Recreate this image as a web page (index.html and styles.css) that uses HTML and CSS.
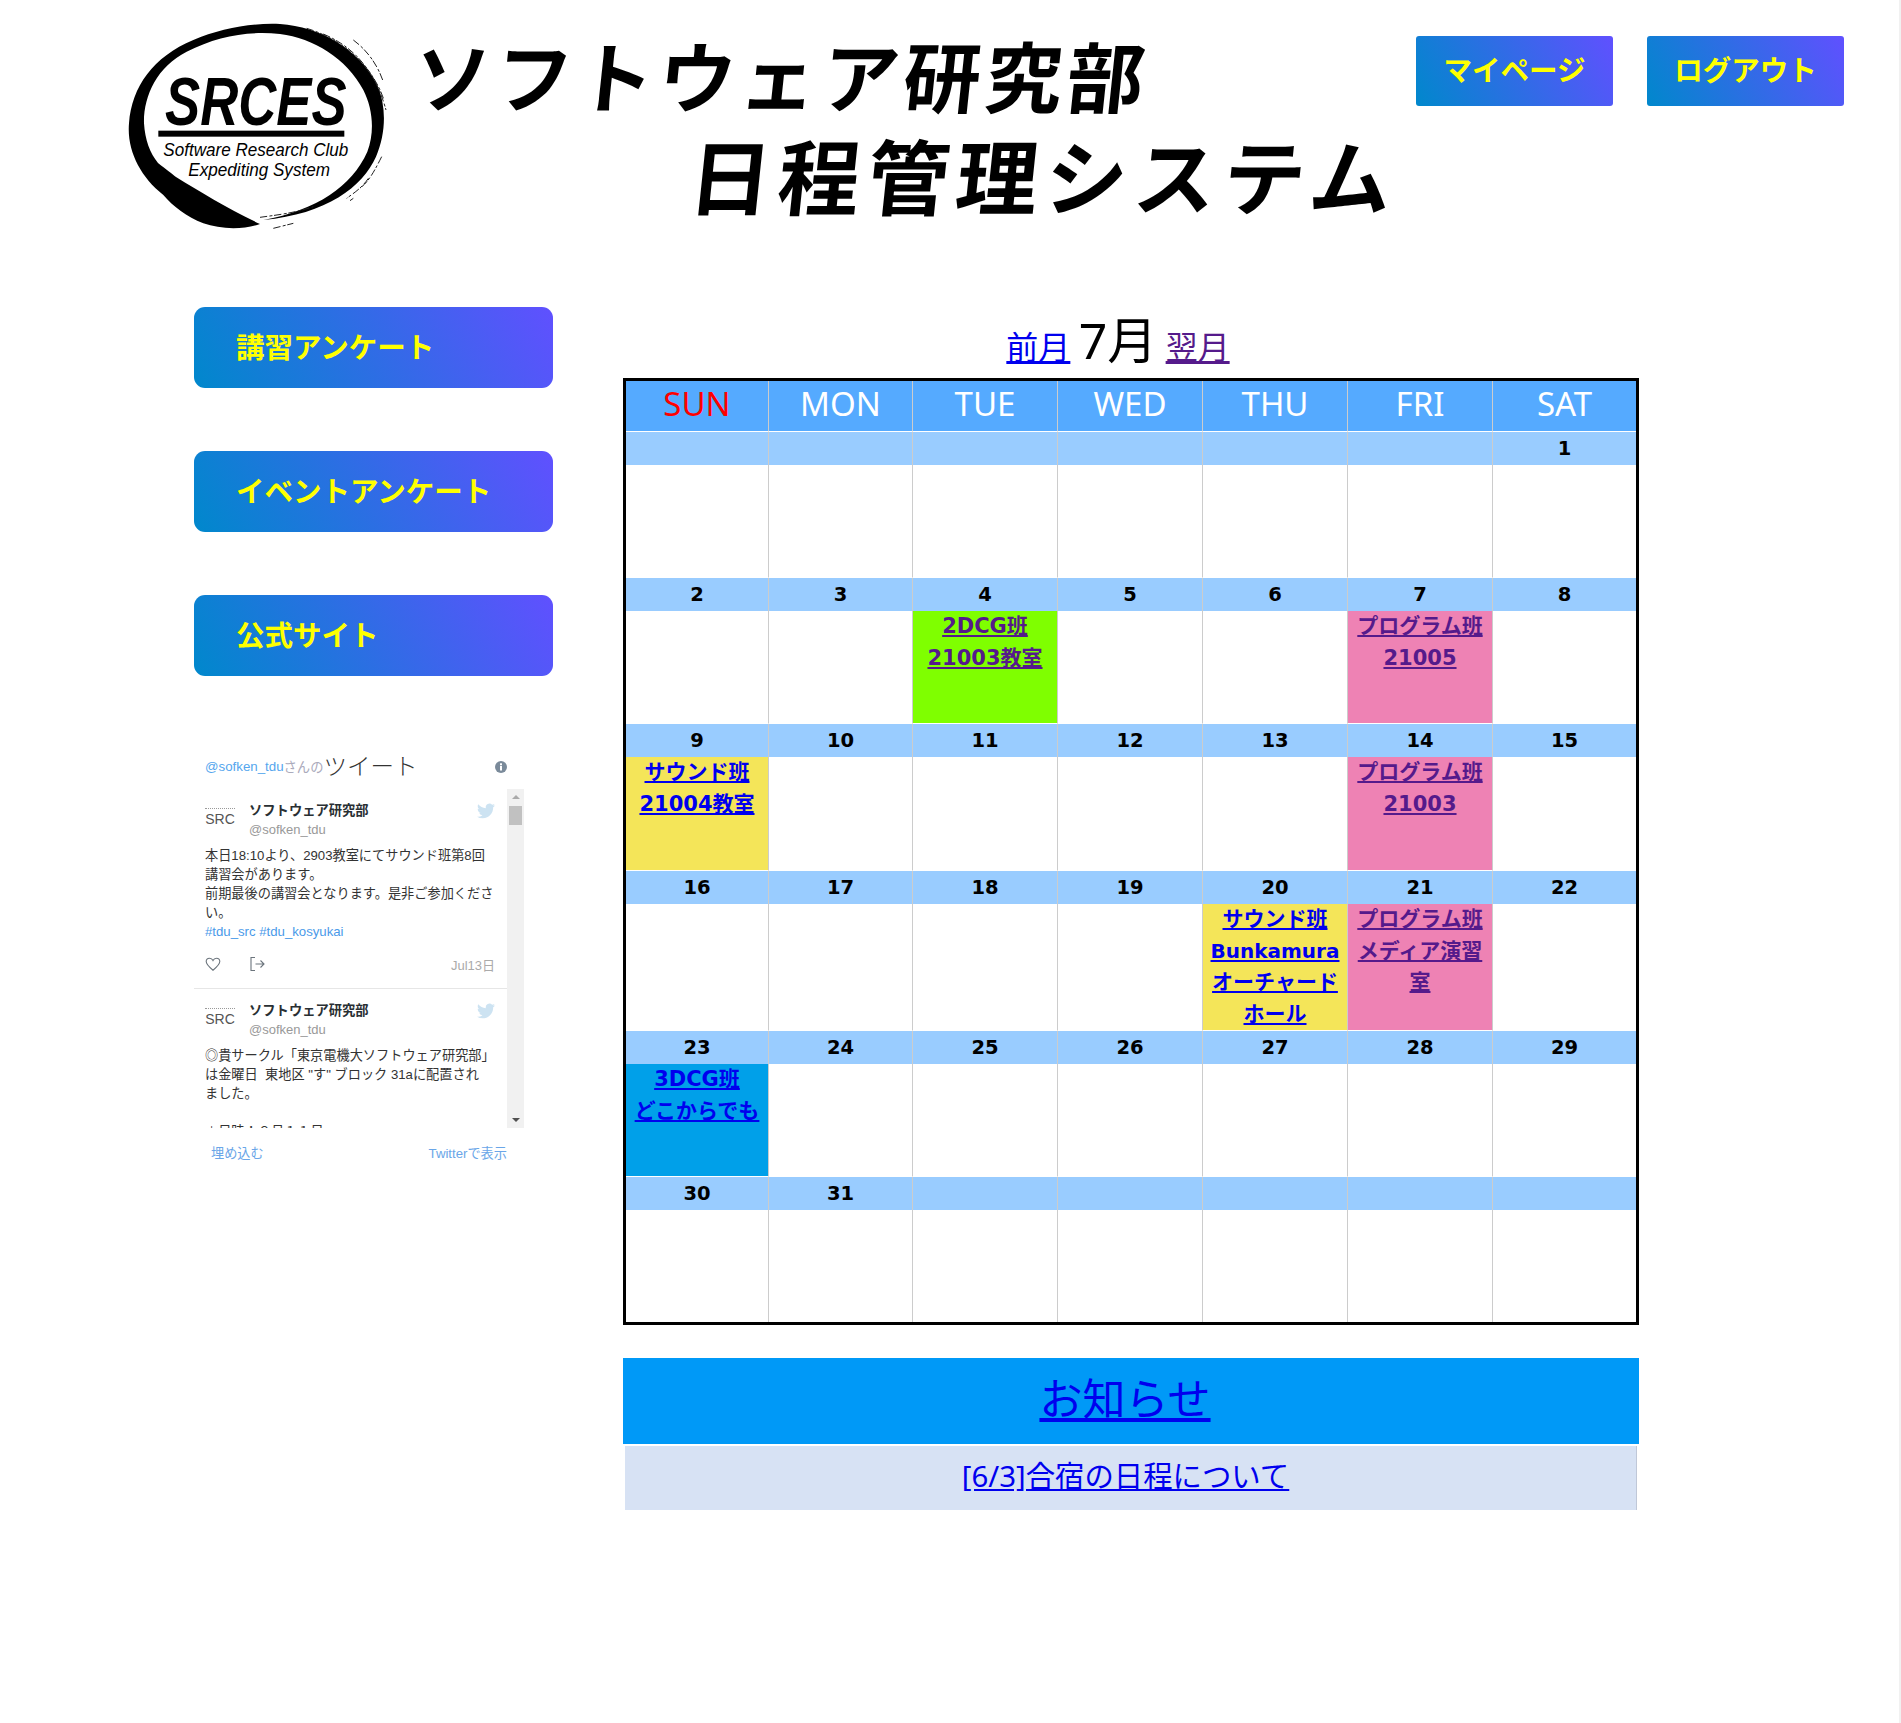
FILE: index.html
```html
<!DOCTYPE html>
<html lang="ja">
<head>
<meta charset="utf-8">
<title>ソフトウェア研究部 日程管理システム</title>
<link rel="stylesheet" href="styles.css">
</head>
<body>
<header class="header">
  <svg class="logo" viewBox="0 0 840 690" role="img" aria-label="SRCES">
    <path d="M420 642C370 660 300 658 250 640C200 620 160 590 130 555C60 500 20 420 27 340C35 230 100 140 220 90C300 55 400 38 480 42C600 50 715 115 772 225C800 290 798 370 768 440C728 530 620 612 430 630C590 600 695 530 742 425C765 365 758 295 730 240C680 145 580 85 480 72C380 62 290 80 200 125C110 170 70 260 72 340C75 390 90 430 114 459C140 480 155 490 168 501C240 545 330 600 420 642Z"/>
    <path class="dry" d="M560 55C660 85 755 160 792 270M610 72C700 110 765 180 798 300M700 90C740 120 770 160 788 210M785 440C760 490 745 515 720 535M745 505C725 535 700 550 680 565M420 622C470 615 520 610 580 590M460 655L520 640M700 565L690 572"/>
    <text class="logo-big" x="135" y="345" textLength="545" lengthAdjust="spacingAndGlyphs">SRCES</text>
    <rect x="115" y="362" width="558" height="18"/>
    <text class="logo-small" x="130" y="438" textLength="555" lengthAdjust="spacingAndGlyphs">Software Research Club</text>
    <text class="logo-small" x="205" y="497" textLength="425" lengthAdjust="spacingAndGlyphs">Expediting System</text>
  </svg>
  <h1 class="site-title">
    <span class="title-one">ソフトウェア研究部</span>
    <span class="title-two">日程管理システム</span>
  </h1>
  <nav class="top-nav">
    <a class="grad-btn top-btn" href="#">マイページ</a>
    <a class="grad-btn top-btn" href="#">ログアウト</a>
  </nav>
</header>

<div class="page">
  <aside class="sidebar">
    <a class="grad-btn side-btn" href="#">講習アンケート</a>
    <a class="grad-btn side-btn" href="#">イベントアンケート</a>
    <a class="grad-btn side-btn" href="#">公式サイト</a>

    <section class="widget">
      <div class="widget-head">
        <span class="w-handle">@sofken_tdu</span><span class="w-san">さんの</span><span class="w-title">ツイート</span>
        <svg class="w-info" viewBox="0 0 12 12"><circle cx="6" cy="6" r="6"/><rect class="w-info-mark" x="5" y="5" width="2" height="4.5"/><rect class="w-info-mark" x="5" y="2.3" width="2" height="2"/></svg>
      </div>
      <div class="widget-body">
        <div class="tweets">
          <article class="tweet">
            <div class="tweet-head">
              <div class="avatar"><span class="avatar-dots"></span><span class="avatar-text">SRC</span></div>
              <div class="tweet-author"><div class="author-name">ソフトウェア研究部</div><div class="author-handle">@sofken_tdu</div></div>
              <svg class="bird" viewBox="0 0 24 24"><path d="M23.953 4.57a10 10 0 01-2.825.775 4.958 4.958 0 002.163-2.723c-.951.555-2.005.959-3.127 1.184a4.92 4.92 0 00-8.384 4.482C7.69 8.095 4.067 6.13 1.64 3.162a4.822 4.822 0 00-.666 2.475c0 1.71.87 3.213 2.188 4.096a4.904 4.904 0 01-2.228-.616v.06a4.923 4.923 0 003.946 4.827 4.996 4.996 0 01-2.212.085 4.936 4.936 0 004.604 3.417 9.867 9.867 0 01-6.102 2.105c-.39 0-.779-.023-1.17-.067a13.995 13.995 0 007.557 2.209c9.053 0 13.998-7.496 13.998-13.985 0-.21 0-.42-.015-.63A9.935 9.935 0 0024 4.59z"/></svg>
            </div>
            <p class="tweet-text">本日18:10より、2903教室にてサウンド班第8回<br>講習会があります。<br>前期最後の講習会となります。是非ご参加くださ<br>い。<br><span class="tag">#tdu_src #tdu_kosyukai</span></p>
            <div class="tweet-actions">
              <svg class="act" viewBox="0 0 16 16"><path d="M8 14.2C4 11 1.2 8.6 1.2 5.6 1.2 3.6 2.7 2.2 4.5 2.2 6 2.2 7.3 3 8 4.4 8.7 3 10 2.2 11.500 2.200 13.300 2.200 14.800 3.600 14.800 5.600 14.800 8.600 12 11 8 14.200Z"/></svg>
              <svg class="act act-share" viewBox="0 0 16 16"><path d="M6 1.500H2V14.500H6M6.500 8H15M11.500 4.500L15 8 11.500 11.500"/></svg>
              <span class="tweet-date">Jul13日</span>
            </div>
          </article>
          <article class="tweet tweet-last">
            <div class="tweet-head">
              <div class="avatar"><span class="avatar-dots"></span><span class="avatar-text">SRC</span></div>
              <div class="tweet-author"><div class="author-name">ソフトウェア研究部</div><div class="author-handle">@sofken_tdu</div></div>
              <svg class="bird" viewBox="0 0 24 24"><path d="M23.953 4.57a10 10 0 01-2.825.775 4.958 4.958 0 002.163-2.723c-.951.555-2.005.959-3.127 1.184a4.92 4.92 0 00-8.384 4.482C7.69 8.095 4.067 6.13 1.64 3.162a4.822 4.822 0 00-.666 2.475c0 1.71.87 3.213 2.188 4.096a4.904 4.904 0 01-2.228-.616v.06a4.923 4.923 0 003.946 4.827 4.996 4.996 0 01-2.212.085 4.936 4.936 0 004.604 3.417 9.867 9.867 0 01-6.102 2.105c-.39 0-.779-.023-1.17-.067a13.995 13.995 0 007.557 2.209c9.053 0 13.998-7.496 13.998-13.985 0-.21 0-.42-.015-.63A9.935 9.935 0 0024 4.59z"/></svg>
            </div>
            <p class="tweet-text">◎貴サークル「東京電機大ソフトウェア研究部」<br>は金曜日&nbsp; 東地区 &quot;す&quot; ブロック 31aに配置され<br>ました。<br><br>＊日時：８月１１日<br></p>
          </article>
        </div>
        <div class="scrollbar">
          <span class="arrow-up"></span>
          <span class="thumb"></span>
          <span class="arrow-down"></span>
        </div>
      </div>
      <div class="widget-foot"><span>埋め込む</span><span>Twitterで表示</span></div>
    </section>
  </aside>

  <main class="content">
    <div class="month-row"><a class="link" href="#">前月</a> <span class="month-now">7月</span> <a class="link seen" href="#">翌月</a></div>
    <table class="calendar">
      <thead>
        <tr><th class="sun">SUN</th><th>MON</th><th>TUE</th><th>WED</th><th>THU</th><th>FRI</th><th>SAT</th></tr>
      </thead>
      <tbody>
        <tr class="dates"><td></td><td></td><td></td><td></td><td></td><td></td><td>1</td></tr>
        <tr class="slots"><td></td><td></td><td></td><td></td><td></td><td></td><td></td></tr>
        <tr class="dates"><td>2</td><td>3</td><td>4</td><td>5</td><td>6</td><td>7</td><td>8</td></tr>
        <tr class="slots"><td></td><td></td><td class="ev-green"><a class="link seen" href="#">2DCG班<br>21003教室</a></td><td></td><td></td><td class="ev-pink"><a class="link seen" href="#">プログラム班<br>21005</a></td><td></td></tr>
        <tr class="dates"><td>9</td><td>10</td><td>11</td><td>12</td><td>13</td><td>14</td><td>15</td></tr>
        <tr class="slots slots-tall"><td class="ev-yellow"><a class="link" href="#">サウンド班<br>21004教室</a></td><td></td><td></td><td></td><td></td><td class="ev-pink"><a class="link seen" href="#">プログラム班<br>21003</a></td><td></td></tr>
        <tr class="dates"><td>16</td><td>17</td><td>18</td><td>19</td><td>20</td><td>21</td><td>22</td></tr>
        <tr class="slots"><td></td><td></td><td></td><td></td><td class="ev-yellow"><a class="link" href="#">サウンド班<br><span class="narrow">Bunkamura</span><br>オーチャード<br>ホール</a></td><td class="ev-pink"><a class="link seen" href="#">プログラム班<br>メディア演習<br>室</a></td><td></td></tr>
        <tr class="dates"><td>23</td><td>24</td><td>25</td><td>26</td><td>27</td><td>28</td><td>29</td></tr>
        <tr class="slots"><td class="ev-blue"><a class="link" href="#">3DCG班<br>どこからでも</a></td><td></td><td></td><td></td><td></td><td></td><td></td></tr>
        <tr class="dates"><td>30</td><td>31</td><td></td><td></td><td></td><td></td><td></td></tr>
        <tr class="slots slots-short"><td></td><td></td><td></td><td></td><td></td><td></td><td></td></tr>
      </tbody>
    </table>
    <h2 class="notice-title"><a class="link" href="#">お知らせ</a></h2>
    <div class="notice-item"><a class="link" href="#">[6/3]合宿の日程について</a></div>
  </main>
</div>
</body>
</html>
```
FILE: styles.css
```css
* { box-sizing: border-box; }
html, body { margin: 0; padding: 0; background: #fff; }
body { min-height: 1723px; font-family: "Noto Sans", "Noto Sans CJK JP", sans-serif; color: #000; border-right: 2px solid #f1f1f1; }

.header { display: flex; align-items: flex-start; height: 240px; padding: 10px 55px 0 120px; }
.logo { width: 280px; height: 230px; flex: none; overflow: visible; }
.logo path.dry { fill: none; stroke: #222; stroke-width: 3; stroke-dasharray: 22 7 9 5; }
.logo-big { font: italic 700 206px "Liberation Sans", sans-serif; }
.logo-small { font: italic 400 56px "Liberation Sans", sans-serif; }

.site-title { margin: 14px 0 0 14px; font-family: "Noto Sans CJK JP", sans-serif; font-weight: 700; display: flex; flex-direction: column; white-space: nowrap; }
.title-one { font-size: 77px; letter-spacing: 4.7px; line-height: 100px; transform: skewX(-6deg); transform-origin: left center; }
.title-two { font-size: 82px; letter-spacing: 7px; line-height: 100px; margin-left: 276px; transform: skewX(-6deg); transform-origin: left center; }

.grad-btn { display: flex; align-items: center; color: #ff0; font-weight: 700; text-decoration: none; font-family: "Noto Sans CJK JP", sans-serif; font-size: 28.5px; padding-bottom: 5px; background: linear-gradient(60deg, #0088cc, #6050ff); }
.top-nav { margin: 26px 0 0 auto; display: flex; gap: 34px; }
.top-btn { width: 197px; height: 70px; justify-content: center; border-radius: 3px; }

.page { display: flex; align-items: flex-start; padding-left: 194px; }
.sidebar { width: 359px; flex: none; padding-top: 67px; display: flex; flex-direction: column; gap: 63px; }
.side-btn { height: 81px; padding-left: 42px; border-radius: 11px; }

.widget { width: 330px; margin-top: 11px; font-family: "Liberation Sans", "Noto Sans CJK JP", sans-serif; color: #333; }
.widget-head { height: 39px; padding: 0 0 6px 11px; display: flex; align-items: center; position: relative; }
.w-handle { color: #55a6ee; font-size: 13.3px; }
.w-san { color: #aab; font-size: 13.3px; }
.w-title { font-size: 23.5px; color: #333; font-weight: 300; line-height: 30px; }
.w-info { position: absolute; left: 301px; top: 11px; width: 12px; height: 12px; fill: #7a8a9a; }
.w-info-mark { fill: #fff; }
.widget-body { display: flex; height: 339px; }
.tweets { width: 313px; flex: none; overflow: hidden; }
.tweet { padding: 12px 12px 16px 11px; border-bottom: 1px solid #e6e6e6; }
.tweet-last { border-bottom: 0; }
.tweet-head { display: flex; }
.avatar { width: 30px; height: 36px; margin-right: 14px; display: flex; flex-direction: column; align-items: center; padding-top: 7px; }
.avatar-dots { width: 30px; border-top: 1px dotted #999; }
.avatar-text { font-size: 14px; line-height: 15px; margin-top: 3px; color: #555; }
.tweet-author { flex: 1; }
.author-name { font-size: 13.3px; font-weight: 700; line-height: 19px; color: #292f33; }
.author-handle { font-size: 13px; line-height: 20px; color: #999; }
.bird { width: 18px; height: 18px; fill: #cde3f2; margin: 1px 0 0; }
.tweet-text { margin: 6px 0 0; font-size: 13.2px; line-height: 19px; white-space: nowrap; }
.tag { color: #4a9ae9; }
.tweet-actions { margin-top: 14px; height: 17px; display: flex; align-items: center; }
.act { width: 16px; height: 16px; fill: none; stroke: #6b747c; stroke-width: 1.100; }
.act-share { margin-left: 28px; }
.tweet-date { margin-left: auto; font-size: 13px; color: #aaa; padding-top: 2px; }
.scrollbar { width: 17px; flex: none; background: #f1f1f1; display: flex; flex-direction: column; align-items: center; }
.arrow-up { margin-top: 6px; width: 0; height: 0; border: 4px solid transparent; border-top: 0; border-bottom: 4px solid #aaa; }
.thumb { margin-top: 7px; width: 13px; height: 19px; background: #c1c1c1; }
.arrow-down { margin-top: auto; margin-bottom: 6px; width: 0; height: 0; border: 4px solid transparent; border-bottom: 0; border-top: 4px solid #505050; }
.widget-foot { width: 313px; height: 48px; padding: 0 0 0 17px; display: flex; justify-content: space-between; align-items: center; font-size: 13.2px; color: #6aa6e8; }

.content { width: 1016px; flex: none; margin-left: 70px; }
.link { color: #00e; }
.link.seen { color: #551a8b; }
.month-row { height: 138px; padding: 62px 26px 0 0; text-align: center; font-size: 32px; line-height: 76px; font-family: "Noto Sans", "Noto Sans CJK JP", sans-serif; }
.month-now { font-size: 50px; }

.calendar { width: 1016px; table-layout: fixed; border-collapse: separate; border-spacing: 0; border: 3px solid #000; }
.calendar th { height: 51px; width: 145px; padding: 0 0 5px; background: #55aaff; color: #fff; font-weight: 400; font-size: 33px; border-right: 1px solid #ccc; border-bottom: 1px solid #fff; }
.calendar th:nth-child(1), .calendar th:nth-child(7) { width: 143px; }
.calendar th:nth-child(2) { width: 144px; }
.calendar th.sun { color: #f00; }
.calendar td { padding: 0; text-align: center; vertical-align: top; border-right: 1px solid #ccc; }
.calendar th:last-child, .calendar td:last-child { border-right: 0; }
.dates td { height: 33px; background: #99ccff; font: 700 19.5px/33px "DejaVu Sans", sans-serif; }
.slots td { height: 113px; border-bottom: 1px solid #fff; font: 700 21px/31.5px "DejaVu Sans", "Noto Sans CJK JP", sans-serif; }
.slots-tall td { height: 114px; }
.slots-short td { height: 112px; border-bottom: 0; }
.narrow { font-size: 20px; }
.ev-green { background: #7fff00; }
.ev-pink { background: #ee82b4; }
.ev-yellow { background: #f4e559; }
.ev-blue { background: #00a0e9; }

.notice-title { margin: 33px 0 0; height: 86px; background: #0099f7; text-align: center; font-weight: 400; font-size: 43px; line-height: 77px; padding-right: 12px; font-family: "Noto Sans CJK JP", sans-serif; }
.notice-item { margin: 2px 2px 0; height: 64px; background: #d7e2f4; border-right: 1px solid #c0c8d8; text-align: center; font-size: 29.4px; line-height: 60px; padding-right: 10px; font-family: "Noto Sans", "Noto Sans CJK JP", sans-serif; }
```
